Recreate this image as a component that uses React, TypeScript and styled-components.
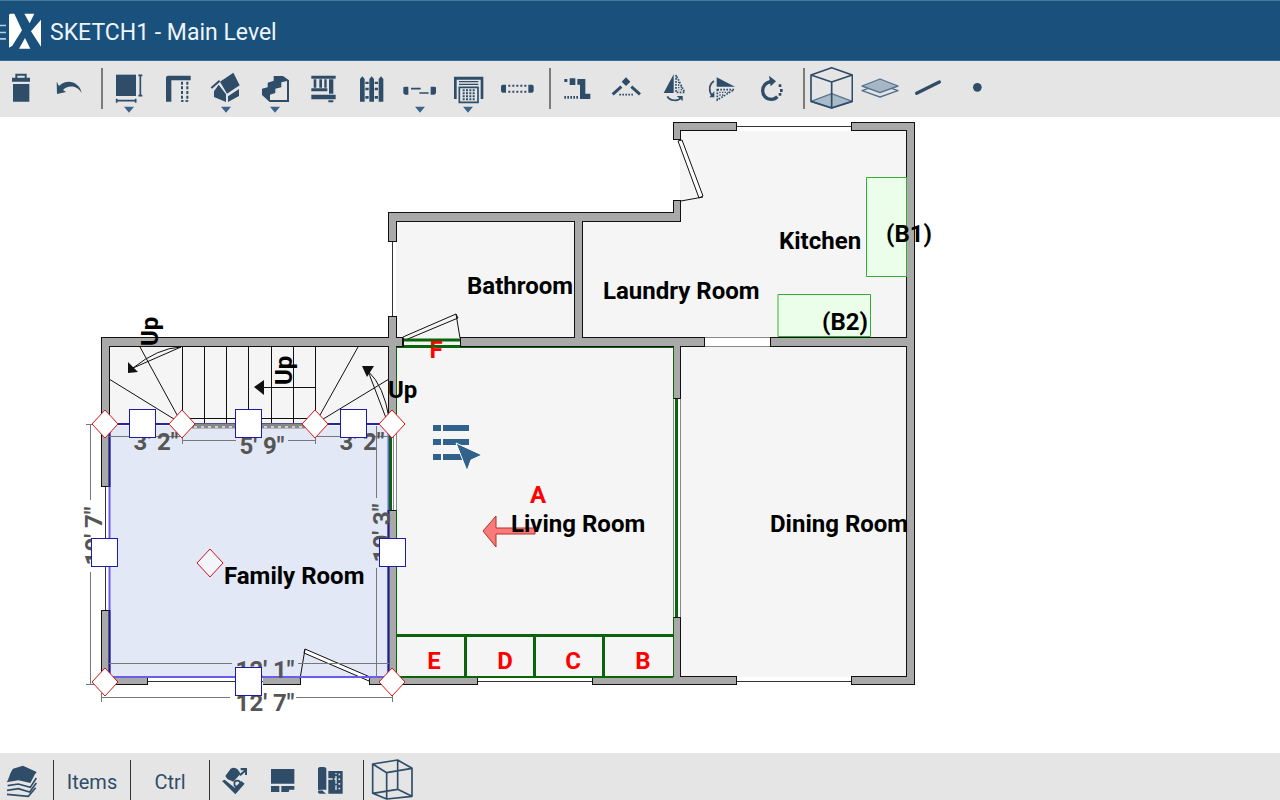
import React from "react";
import styled, { createGlobalStyle } from "styled-components";

const ink = "#2f4d68";
const font = `Roboto, "Liberation Sans", sans-serif`;

const GlobalStyle = createGlobalStyle`
  * { box-sizing: border-box; }
  body { margin: 0; background: #fff; font-family: ${font}; }
`;

const Page = styled.div`
  display: flex;
  flex-direction: column;
  min-height: 100vh;
`;

const Header = styled.header`
  display: flex;
  align-items: center;
  height: 61px;
  padding-top: 4px;
  background: #1a507c;
  border-top: 1px solid #4a7896;
  border-bottom: 1px solid #356c96;
`;

const MenuButton = styled.button`
  display: block;
  width: 42px;
  height: 40px;
  padding: 0;
  border: 0;
  background: none;
  svg { display: block; }
`;

const Title = styled.h1`
  margin: 0 0 0 8px;
  font-size: 23px;
  line-height: 32px;
  font-weight: 400;
  color: #eef5fa;
  white-space: nowrap;
`;

const Toolbar = styled.div`
  display: flex;
  height: 56px;
  background: #e5e5e5;
  overflow: hidden;
`;

const ToolGroup = styled.div<{ $width: number; $bleed?: boolean }>`
  display: flex;
  flex: none;
  width: ${(p) => p.$width}px;
  margin-left: ${(p) => (p.$bleed ? -3 : 0)}px;
`;

const ToolButton = styled.button`
  flex: 1;
  min-width: 0;
  display: flex;
  justify-content: center;
  padding: 0;
  border: 0;
  background: none;
  color: ${ink};
  svg { display: block; flex: none; }
`;

const Divider = styled.span`
  flex: none;
  width: 2px;
  height: 41px;
  margin: 7px 2px 0 8px;
  background: #7b7b7b;
`;

const Canvas = styled.main`
  flex: 1;
  background: #fff;
  overflow: hidden;
  svg { display: block; width: 100%; }
`;

const Footer = styled.footer`
  display: flex;
  height: 47px;
  background: #e5e5e5;
  overflow: hidden;
`;

const FooterButton = styled.button<{ $width: number }>`
  flex: none;
  display: flex;
  justify-content: center;
  align-items: flex-start;
  width: ${(p) => p.$width}px;
  padding: 0;
  border: 0;
  background: none;
  color: ${ink};
  svg { display: block; flex: none; }
`;

const FooterText = styled.span`
  padding-top: 17px;
  font-family: ${font};
  font-size: 20px;
  line-height: 24px;
`;

const FooterDivider = styled.span<{ $before?: number }>`
  flex: none;
  width: 1px;
  height: 40px;
  margin: 7px 0 0 ${(p) => p.$before ?? 0}px;
  background: #333;
`;

const Caret = () => <path d="M-15 137H15L0 155Z" fill="#3b648a" />;

const icons: Record<string, React.ReactNode> = {
  Delete: (
    <>
      <path d="M-14 52V41H14V52" fill="none" stroke="currentColor" strokeWidth="6" />
      <path d="M-27 50H27V62H-27ZM-24 69H25V122H-24Z" />
    </>
  ),
  Undo: <path d="M-37 62L-36 99L-9 93L-18 87C-6 74 22 70 38 96C35 72 8 56 -12 64C-20 67 -26 71 -30 75Z" />,
  "Room size": (
    <>
      <path d="M-39 41H21V105H-39Z" />
      <path d="M34 43V104M28 43H40M28 104H40M-37 119H20M-37 113V125M20 113V125" stroke="currentColor" strokeWidth="5" />
      <Caret />
    </>
  ),
  Wall: (
    <>
      <path d="M-36 122V50Q-36 44 -30 44H38V58H-20V122Z" />
      <path d="M12 62V122M28 62V122" stroke="currentColor" strokeWidth="6" strokeDasharray="9 5" />
      <path d="M10 120H30" stroke="currentColor" strokeWidth="4" strokeDasharray="7 5" />
    </>
  ),
  Roof: (
    <>
      <path d="M-18 62L22 35L41 73L3 98Z" />
      <path d="M-44 81L-19 59" stroke="currentColor" strokeWidth="6" />
      <path d="M-36 91L-22 71L0 100V123L-36 108ZM6 106L39 84V105L6 123Z" />
      <Caret />
    </>
  ),
  Stairs: (
    <>
      <path d="M-39 83L-22 79V65L-4 59V45H24L42 58V123H-16L-39 102Z" />
      <path d="M-15 117V101L1 96V83L19 79V64L36 60V117Z" fill="#e5e5e5" />
      <Caret />
    </>
  ),
  Framing: (
    <path d="M-35 44H38V53H-35ZM-28 55H-20V80H-28ZM-11 55H-3V80H-11ZM4 55H11V80H4ZM18 55H31V98H18ZM-35 82H13V91H-35ZM-35 101H38V115H-35ZM16 118H31V124H16Z" />
  ),
  Fence: (
    <path d="M-33 54L-26 46L-19 54V122H-33ZM-5 54L2 46L9 54V122H-5ZM23 54L30 46L37 54V122H23ZM-17 62H-7V69H-17ZM11 62H21V69H11ZM-17 80H-7V88H-17ZM11 80H21V88H11ZM-17 105H-7V113H-17ZM11 105H21V113H11Z" />
  ),
  Door: (
    <>
      <path d="M-50 79L-45 77H-35V101H-45L-50 97ZM48 79L43 77H32V101H43L48 97Z" />
      <path d="M-27 83H2M-2 96H26" stroke="currentColor" strokeWidth="5" />
      <Caret />
    </>
  ),
  Appliance: (
    <>
      <path d="M-42 114V47H46V114H38V56H-34V114Z" />
      <path d="M-27 62H31M-27 70H31" stroke="currentColor" strokeWidth="4" />
      <path d="M-26 79H30V124H-26Z" fill="none" stroke="currentColor" strokeWidth="5" />
      <path d="M-16 88H22M-16 97H22M-16 106H22M-16 115H22" stroke="currentColor" strokeWidth="6" strokeDasharray="6 4" />
      <Caret />
    </>
  ),
  Opening: (
    <>
      <path d="M-48 75L-44 71H-33V95H-44L-48 91ZM50 75L46 71H34V95H46L50 91Z" />
      <path d="M-26 74H30M-26 92H30" stroke="currentColor" strokeWidth="6" strokeDasharray="6 6" />
    </>
  ),
  Align: (
    <>
      <path d="M-38 54H-29V63H-38ZM-22 52H-5V72H-22ZM1 54H25V98H40V114H9V71H1Z" />
      <path d="M-38 109H6" stroke="currentColor" strokeWidth="8" strokeDasharray="5 4" />
    </>
  ),
  Vertex: (
    <>
      <path d="M0 49L13 62L0 75L-13 62Z" />
      <path d="M-40 100L-14 77M42 100L16 77" stroke="currentColor" strokeWidth="9" />
      <path d="M-20 101H24" stroke="currentColor" strokeWidth="5" strokeDasharray="5 4" />
    </>
  ),
  "Flip horizontal": (
    <>
      <path d="M-1 40V96H-31Z" />
      <path d="M6 42V94H32Z" fill="none" stroke="currentColor" strokeWidth="5" strokeDasharray="5 4" />
      <path d="M14 62V88M22 76V88" stroke="currentColor" strokeWidth="4" strokeDasharray="4 4" />
      <path d="M-20 106C-14 120 14 122 20 110" fill="none" stroke="currentColor" strokeWidth="5" />
      <path d="M8 105H26V120Z" />
    </>
  ),
  "Flip vertical": (
    <>
      <path d="M-16 49V77H39Z" />
      <path d="M-14 86H36L-14 117Z" fill="none" stroke="currentColor" strokeWidth="5" strokeDasharray="5 4" />
      <path d="M-8 94H20M-8 102H8" stroke="currentColor" strokeWidth="4" strokeDasharray="4 4" />
      <path d="M-24 60C-40 70 -40 92 -30 103" fill="none" stroke="currentColor" strokeWidth="5" />
      <path d="M-23 90V109H-38Z" />
    </>
  ),
  Rotate: (
    <>
      <path d="M2 62C-34 64 -34 114 2 115Q12 115 19 107" fill="none" stroke="currentColor" strokeWidth="10" />
      <path d="M-6 44L15 61L-1 76Z" />
      <path d="M23 70H31V78H23ZM27 84H35V93H27ZM23 96H31V104H23Z" />
    </>
  ),
  "Box view": (
    <g stroke="currentColor" strokeWidth="5" fill="none" strokeLinejoin="round">
      <path d="M-60 121L2 98L64 121L2 141Z" fill="#a9bac8" stroke="#5a7690" strokeWidth="4" />
      <path d="M2 20L64 42V121L2 141L-60 121V42ZM-60 42L2 63L64 42M2 63V141" />
    </g>
  ),
  "Layer view": (
    <g stroke="#54718c" strokeWidth="4" strokeLinejoin="round">
      <path d="M-54 89L0 70L54 89L0 108Z" fill="#e5e5e5" />
      <path d="M-54 75L0 54L54 75L0 95Z" fill="#a5b6c5" />
    </g>
  ),
  "Line tool": <path d="M-34 97L34 63" stroke="currentColor" strokeWidth="10" strokeLinecap="round" />,
  "Point tool": <circle cx="1" cy="79" r="13" />,
};

const Tool = ({ name }: { name: string }) => (
  <ToolButton type="button" aria-label={name}>
    <svg width="44" height="56" viewBox="-66 0 132 168" fill="currentColor">{icons[name]}</svg>
  </ToolButton>
);

const FooterIcon = ({ children }: { children: React.ReactNode }) => (
  <svg width="44" height="47" viewBox="-66 0 132 141" fill="currentColor">{children}</svg>
);

/* Walls as x1, y1, x2, y2 */
const walls = [
  [673, 122, 737, 131], [851, 122, 915, 131], [906, 122, 915, 685], [673, 122, 681, 140],
  [673, 200, 681, 222], [388, 212, 681, 222], [388, 212, 397, 242], [388, 316, 397, 426],
  [574, 212, 583, 347], [101, 337, 403, 347], [460, 337, 705, 347], [770, 337, 915, 347],
  [101, 337, 110, 487], [101, 610, 110, 685], [101, 676, 148, 685], [249, 676, 301, 685],
  [369, 676, 478, 685], [592, 676, 737, 685], [851, 676, 915, 685], [388, 510, 397, 685],
  [673, 337, 681, 399], [673, 617, 681, 685],
];

const labels: [string, number, number][] = [
  ["Family Room", 224, 584], ["Living Room", 511, 532], ["Bathroom", 467, 294],
  ["Laundry Room", 603, 299], ["Kitchen", 779, 249], ["(B1)", 886, 242],
  ["(B2)", 822, 330], ["Dining Room", 770, 532], ["Up", 388, 398],
];

const tags: [string, number, number][] = [
  ["A", 538, 503], ["E", 434, 669], ["D", 505, 669], ["C", 573, 669], ["B", 643, 669],
];

const squares = [[142, 424], [248, 424], [353, 424], [104, 553], [392, 553], [248, 682]];
const diamonds = [[105, 424], [182, 424], [315, 424], [392, 424], [105, 682], [392, 682], [210, 563]];

const FloorPlan = () => (
  <svg viewBox="0 117 1280 636" preserveAspectRatio="xMinYMin meet" role="img" aria-label="Main level floor plan" fontFamily={font} fontWeight="700" fontSize="24">
    <path d="M680 126H911V681H105V342H392V217H680Z" fill="#f5f5f5" />
    <path d="M109 426H389V677H109Z" fill="#e2e8f5" />

    {walls.map(([a, b, c, d]) => <rect key={`o${a}-${b}-${c}-${d}`} x={a} y={b} width={c - a} height={d - b} fill="#111" />)}
    {walls.map(([a, b, c, d]) => <rect key={`i${a}-${b}-${c}-${d}`} x={a + 1} y={b + 1} width={c - a - 2} height={d - b - 2} fill="#a9a9a9" />)}

    {/* window openings */}
    <path d="M737 121H851V131H737ZM388 242H396V316H388ZM101 487H109V610H101ZM148 678H263V686H148ZM301 679H369V686H301ZM478 677H592V686H478ZM737 677H851V686H737ZM705 338H770V346H705Z" fill="#fff" />
    <g stroke="#333" strokeWidth="1" shapeRendering="crispEdges">
      <path d="M737 126.5H851M392.5 242V316M105.5 487V610M148 681.5H263M478 681.5H592M737 681.5H851" />
      <path d="M705 337.5H770M705 346.5H770" stroke="#888" />
      <path d="M736.5 122V131M851.5 122V131M388 241.5H397M388 316.5H397M477.5 676V685M592.5 676V685M736.5 676V685M851.5 676V685" stroke="#111" />
    </g>

    {/* counters */}
    <path d="M866.5 177.5H906.5V276.5H866.5ZM778 294.5H870.5V336.5H778Z" fill="#eafeea" stroke="#36ab36" />

    {/* stairs */}
    <g stroke="#111" fill="none">
      <path d="M182.5 347V424M204.5 347V424M226.5 347V424M248.5 347V424M271.5 347V424M293.5 347V424M315.5 347V424M182 418.5H315M262 387.5H315" shapeRendering="crispEdges" />
      <path d="M182 424L140 347M182 424L109 379M315 424L358 347M315 424L389 379" />
      <path d="M181 347Q158 348 133 368M181 347L133 368M368 371Q384 386 389 418M368 371L386 418" />
    </g>
    <path d="M128 362V373L138 372ZM254 387L264 380V395ZM362 366H374L367 377Z" fill="#111" />

    {/* doors */}
    <g fill="#fff" stroke="#111">
      <path d="M678 141L682 140L703 196L699 198ZM703 197L681 201" />
      <path d="M403 337L456 314L458 318L403 341ZM456 314L460 338" fill="#f5f5f5" />
      <path d="M305 649L304 653L369 681L370 677ZM305 649L300 679" />
    </g>

    {/* living room trim */}
    <g stroke="#0a650a" fill="none">
      <path d="M396.5 347.5H673.5M396.5 347V677M673.5 347V399M673.5 617V677" strokeWidth="1" />
      <path d="M396 635.5H673M465.5 635V677M534.5 635V677M603.5 635V677" strokeWidth="3" />
      <path d="M396 677H673" strokeWidth="2" />
      <path d="M676.5 399V617" strokeWidth="3" />
    </g>
    <path d="M403 339H460V346H403Z" fill="#f5f5f5" />
    <path d="M392 426H397V510H392Z" fill="#fff" />
    <path d="M393.5 426V510M396.5 426V510M680.5 399V617M673.5 399V617" stroke="#888" />
    <path d="M678 399H680V617H678Z" fill="#fff" />

    {/* door F threshold and tag */}
    <path d="M403 340H460" stroke="#0a650a" strokeWidth="3" />
    <text x="436" y="358" fill="#f00" textAnchor="middle">F</text>
    <path d="M403 346H460" stroke="#0a650a" strokeWidth="2" />
    <path d="M403.5 338V347M460.5 338V347" stroke="#111" />

    {/* selected room outline */}
    <path d="M105 424H392" stroke="#2424a0" strokeWidth="2" />
    <path d="M109.5 426V677M109 677H389M388.5 426V677" stroke="#6b5cf0" strokeWidth="2" fill="none" />
    <path d="M109.5 426V487M109.5 610V677M388.5 510V677" stroke="#20207a" strokeWidth="2" />
    <path d="M390.5 426V510" stroke="#0a650a" strokeWidth="3" />
    <path d="M192 426H305" stroke="#888" strokeWidth="5" />
    <path d="M194 427H305" stroke="#d0d0d0" strokeWidth="2" strokeDasharray="3 4" />

    {/* dimension lines */}
    <g stroke="#777" shapeRendering="crispEdges">
      <path d="M90.5 424V500M90.5 572V685M86 424.5H100M86 684.5H100M109 436.5H182M315 436.5H389M182 440.5H236M288 440.5H315M182.5 436V444M315.5 436V444M376.5 426V498M376.5 568V677M109 663.5H232M298 663.5H389M101 697.5H230M296 697.5H392M101.5 693V702M392.5 693V702" />
    </g>
    <g fill="#555" textAnchor="middle">
      <text x="156" y="450">3' 2"</text>
      <text x="262" y="454">5' 9"</text>
      <text x="362" y="450">3' 2"</text>
      <text x="265" y="678">12' 1"</text>
      <text x="265" y="711">12' 7"</text>
      <text transform="translate(102 536) rotate(-90)">10' 7"</text>
      <text transform="translate(390 533) rotate(-90)">10' 3"</text>
    </g>

    {/* item picker */}
    <path d="M433 425H441V431H433ZM443 425H469V431H443ZM433 439H441V445H433ZM443 439H469V445H443ZM433 454H441V460H433ZM443 454H463V460H443Z" fill="#30628c" />
    <path d="M456 443L482 455L471 460L467 471Z" fill="#30628c" stroke="#fff" strokeWidth="1" />

    {/* direction arrow */}
    <path d="M483 531L496 516V528H535V534H496V547Z" fill="#ff0000" fillOpacity="0.5" stroke="#b03030" />

    {squares.map(([x, y]) => <rect key={`${x}-${y}`} x={x - 12.5} y={y - 14.5} width="26" height="28" fill="#fff" stroke="#1c1ca8" />)}
    {diamonds.map(([x, y]) => <path key={`${x}-${y}`} d={`M${x} ${y - 14}L${x + 13} ${y}L${x} ${y + 14}L${x - 13} ${y}Z`} fill={y === 563 ? "#f3f5fa" : "#fff"} stroke="#d41414" />)}

    {labels.map(([t, x, y]) => <text key={t} x={x} y={y} fill="#000">{t}</text>)}
    <text transform="translate(158 346) rotate(-90)">Up</text>
    <text transform="translate(292 385) rotate(-90)">Up</text>
    {tags.map(([t, x, y]) => <text key={t} x={x} y={y} fill="#f00" textAnchor="middle">{t}</text>)}
  </svg>
);

export default function App() {
  return (
    <Page>
      <GlobalStyle />
      <Header>
        <MenuButton type="button" aria-label="Open menu">
          <svg width="42" height="40" viewBox="0 0 126 120" fill="#fff">
            <path d="M0 35H18V40H0ZM0 56H18V61H0ZM0 75H18V80H0Z" fill="#b9cfe0" />
            <path d="M27 5L31 2H43L66 52L37 98L27 104ZM73 2H103L89 31ZM123 20V101L93 55ZM75 75L91 107H57Z" />
          </svg>
        </MenuButton>
        <Title>SKETCH1 - Main Level</Title>
      </Header>
      <Toolbar role="toolbar" aria-label="Sketch tools">
        <ToolGroup $width={96} $bleed>
          {["Delete", "Undo"].map((n) => <Tool key={n} name={n} />)}
        </ToolGroup>
        <Divider />
        <ToolGroup $width={436}>
          {["Room size", "Wall", "Roof", "Stairs", "Framing", "Fence", "Door", "Appliance", "Opening"].map((n) => <Tool key={n} name={n} />)}
        </ToolGroup>
        <Divider />
        <ToolGroup $width={242}>
          {["Align", "Vertex", "Flip horizontal", "Flip vertical", "Rotate"].map((n) => <Tool key={n} name={n} />)}
        </ToolGroup>
        <Divider />
        <ToolGroup $width={194}>
          {["Box view", "Layer view", "Line tool", "Point tool"].map((n) => <Tool key={n} name={n} />)}
        </ToolGroup>
      </Toolbar>
      <Canvas>
        <FloorPlan />
      </Canvas>
      <Footer>
        <FooterButton type="button" aria-label="Levels" $width={42}>
          <FooterIcon>
            <path d="M-43 88C-36 78 -34 60 -24 47L6 38L47 57C38 66 36 78 28 90L-8 82Z" />
            <path d="M-40 98L-8 93L28 103L46 75M-42 112L-8 107L26 117L46 90M-42 124L22 130L44 104" fill="none" stroke="currentColor" strokeWidth="5" />
          </FooterIcon>
        </FooterButton>
        <FooterDivider $before={11} />
        <FooterButton type="button" $width={76}><FooterText>Items</FooterText></FooterButton>
        <FooterDivider />
        <FooterButton type="button" $width={78}><FooterText>Ctrl</FooterText></FooterButton>
        <FooterDivider />
        <FooterButton type="button" aria-label="Attach" $width={48}>
          <FooterIcon>
            <path d="M-26 69L-10 47Q2 40 12 50L20 62L-2 86L-20 78ZM-36 84L-28 80L2 104L22 84L32 92L4 124Z" />
            <circle cx="10" cy="92" r="9" fill="none" stroke="currentColor" strokeWidth="5" />
            <path d="M18 67L36 50" stroke="currentColor" strokeWidth="6" />
            <path d="M20 45H39V66H33V52H20Z" />
          </FooterIcon>
        </FooterButton>
        <FooterButton type="button" aria-label="Layout" $width={48}>
          <FooterIcon>
            <path d="M-33 48H37V92H-33ZM-33 99H-8V117H-33ZM-2 99H37V110H22L20 117H-2Z" />
          </FooterIcon>
        </FooterButton>
        <FooterButton type="button" aria-label="Blueprint" $width={48}>
          <FooterIcon>
            <path d="M-36 46Q-34 42 -28 42H-20Q-11 42 -11 48V110H-28Q-36 114 -36 108ZM-36 114L-24 112L-12 122H-30Q-37 122 -36 114ZM-5 54H38V122H-5Z" />
            <path d="M-6 78H18V60M18 78V114" fill="none" stroke="#e5e5e5" strokeWidth="4" strokeDasharray="14 5" />
            <path d="M28 62V116" stroke="#e5e5e5" strokeWidth="5" strokeDasharray="5 9" />
          </FooterIcon>
        </FooterButton>
        <FooterDivider $before={9} />
        <FooterButton type="button" aria-label="3D view" $width={56}>
          <FooterIcon>
            <g fill="none" stroke="currentColor" strokeWidth="5" strokeLinejoin="round">
              <path d="M-58 33L17 21L60 46L-16 59ZM-58 33V121L-16 138V59M60 46V130L-16 138M17 21V109L60 130M-58 121L17 109" />
            </g>
          </FooterIcon>
        </FooterButton>
      </Footer>
    </Page>
  );
}
